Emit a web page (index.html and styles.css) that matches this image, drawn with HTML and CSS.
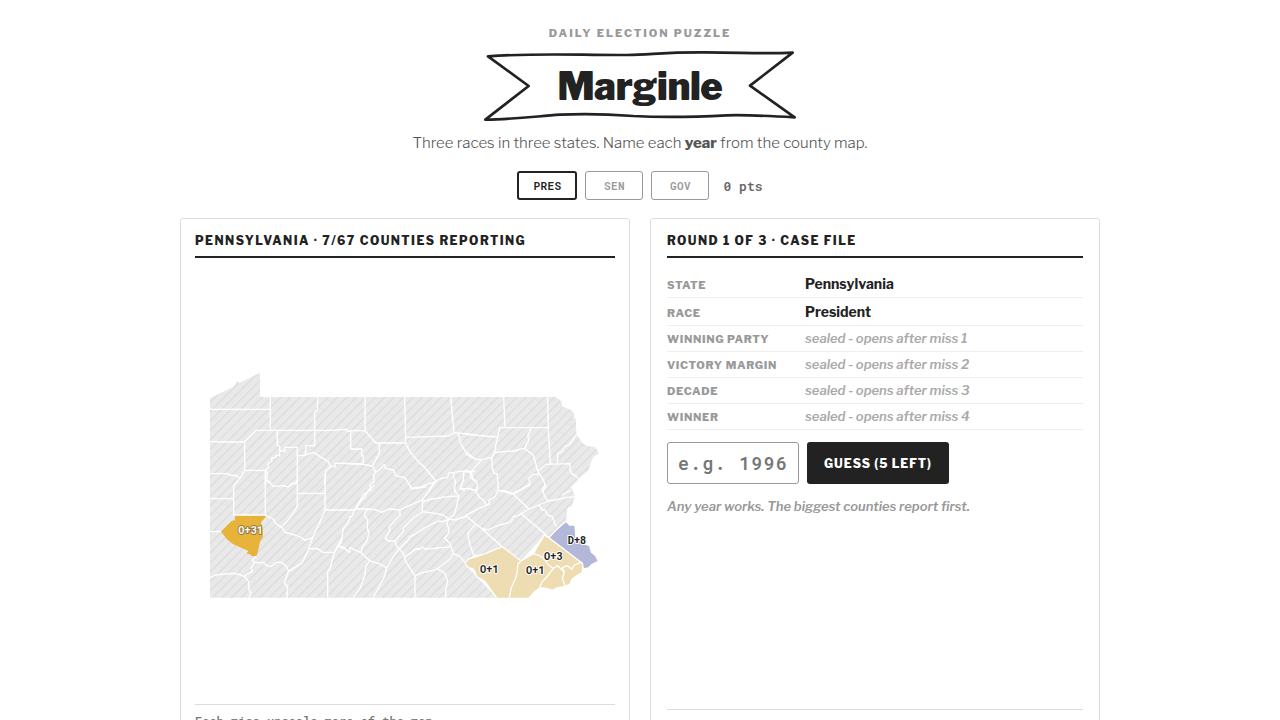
FILE: index.html
```html
<!DOCTYPE html>
<html lang="en">
<head>
<meta charset="utf-8">
<meta name="viewport" content="width=device-width, initial-scale=1">
<title>Marginle</title>
<link rel="stylesheet" href="styles.css">
</head>
<body>
<header class="masthead">
  <p class="kicker">Daily Election Puzzle</p>
  <div class="banner">
    <svg class="ribbon" viewBox="240 84 960 228" aria-hidden="true">
      <path d="M264 109C420 98 540 106 680 105C760 103 790 97 900 97C1010 96 1080 103 1178 98L1050 197L1184 292C1080 286 1040 284 980 286C880 291 760 291 700 288C620 282 560 280 480 284C400 290 340 298 256 299L386 198Z"/>
    </svg>
    <h1 class="title">Marginle</h1>
  </div>
  <p class="tagline">Three races in three states. Name each <strong>year</strong> from the county map.</p>
  <nav class="rounds" aria-label="Rounds">
    <button class="tab tab-active" type="button">PRES</button>
    <button class="tab" type="button">SEN</button>
    <button class="tab" type="button">GOV</button>
    <span class="score">0 pts</span>
  </nav>
</header>
<main class="board">
  <section class="panel map-panel">
    <h2 class="panel-title">Pennsylvania · 7/67 counties reporting</h2>
    <svg class="map" viewBox="0 0 1260 1260" role="img" aria-label="Pennsylvania county map">
      <defs>
        <pattern id="hatch" width="20" height="20" patternUnits="userSpaceOnUse" patternTransform="rotate(45)">
          <rect class="hatch-base" width="20" height="20"/>
          <path class="hatch-line" d="M2 0V20"/>
        </pattern>
      </defs>
      <path fill="url(#hatch)" d="M45 370L115 335L127 318L133 324L195 293V366H1083L1100 380L1102 395L1113 399L1130 406L1138 418L1136 428L1143 432V460L1145 478L1160 502L1178 514L1200 516L1212 535L1195 545L1185 570L1182 585L1160 602L1150 615L1128 635L1140 665L1130 692L1118 698L1116 715L1112 740L1062 788L1048 780L978 858L835 838L820 878L905 968H45Z"/>
      <g class="tossup" transform="translate(810 630)">
        <path d="M0 235L10 222L55 208L112 185L168 228L205 206L238 150L352 235L350 262L335 270L318 283L315 295L300 302L275 307L262 314L245 308L225 306L208 318L190 338H95L75 312L60 290L35 275L30 262L25 252L10 248Z"/>
      </g>
      <path class="dem" transform="translate(810 630)" d="M252 158L270 138L290 120L302 110L313 122H328L331 158L355 178L372 183L378 203L390 213L398 228L378 238L370 247L355 250L352 235Z"/>
      <path class="other" transform="translate(30 600)" d="M90 120H181V127L168 142L173 160L174 185L165 200L160 225L155 243H140L135 238L125 236L130 228L85 208L68 195L48 170L65 152L80 138L90 136Z"/>
      <g class="borders">
        <path transform="translate(30 270)" d="M15 133H196M196 94V195M119 231L137 212L155 196H390M15 230L60 231H119V316H181M338 94L337 135L329 140V242H303L300 272H277M217 196V240L224 244V258H240V247H277V360M300 270L325 262L345 275L370 290L377 305H390V295H415L470 297M377 305L362 318L359 360M224 262V272H212V277L200 279V290L190 294V308L181 316L188 325L184 348L198 352M119 316L104 340L86 362M104 340L95 332L72 330L70 326H15M181 316V360"/>
        <path transform="translate(420 330)" d="M0 135L35 133L37 140L47 137H90M90 36V137L122 174H212M209 36L212 174M212 157L340 153L357 143L380 145L420 149M347 36L357 143M47 137V192H80V212H85V238M0 235H30L85 238L113 243L133 205V176M113 243L122 262L115 270L118 290L105 300L108 315L85 328L60 375M122 262L135 252L148 238L152 250L175 255L182 272L210 278L230 310L260 305L303 288M212 174L225 200L250 230L265 243L303 288L275 328M303 288L320 280L337 278L342 264L358 262L385 258L405 262L420 258M370 145L377 175L390 198L420 222M358 262L355 275L362 290L358 310L360 320M387 258L385 285L375 312L400 310L415 315M405 262L408 280L420 285"/>
        <path transform="translate(810 330)" d="M0 148L98 156M116 36L120 128M104 128H250M104 128L98 156L88 202L80 222L82 250L88 265L97 267L100 316M88 202L145 198L178 190M200 130L188 150L192 165L178 190L205 210L212 235L218 258L240 240M248 36L250 130L256 236M240 238L315 236V255L320 265L335 275L342 283M275 238L278 225V205L290 200L300 185L312 180L335 148M218 258L222 265L235 285L243 305L232 320M222 268H205L192 280L195 298L145 325M0 205L30 222L50 225L62 220L80 218M50 225L18 260L25 285L35 290L38 310L32 320M0 256L18 260M100 316L120 318L145 325M290 330L318 315"/>
        <path transform="translate(30 600)" d="M86 32V120H181V0M15 71H86M184 15L200 28L205 34L235 32L250 36L258 27L272 24L277 15M277 0V95L250 135L230 157M277 55H360M360 0V107L340 150L322 190M360 105H450M181 120L205 132L212 145L230 157L240 172L270 180L290 188L300 196L322 188M322 190L312 220L298 250L290 265L265 280L250 290L238 325L248 335L246 369M312 220L340 222L352 232H388M408 190L410 190L400 212L388 232L375 280L368 290V369M400 212L420 218M15 170H48M155 243L140 255L150 263L175 262L185 272L198 275L215 262H230L245 275L250 287L262 285M150 263L138 280L142 290L125 297L118 305L131 320L132 345L138 355L132 369M15 308L32 300L60 297L90 295L108 300L118 305"/>
        <path transform="translate(420 630)" d="M62 72L75 50L90 35L100 15L118 0M60 75L50 95H45L38 115L25 130L20 160L18 175L8 183L0 200M8 183L28 190L42 202L45 188L60 195L78 203L82 185L95 170L102 145L97 130L98 105L88 90L92 78L105 72M60 72H105L125 75L140 82L160 72L195 75L230 58L262 45L280 20L298 -10M78 203L105 228L130 235L155 248M105 228L92 245L90 270L75 310L55 338M155 248L150 270L130 310L115 338M155 248L175 215L192 192L183 180L180 168L160 168L150 160L165 138L162 125L180 105L195 90V75M225 0L230 12L275 5M262 45V80L235 100L205 130V138L180 168M262 80L300 85L325 90L342 102M262 50L290 42L340 35L370 33M342 102L325 110L310 108L270 128L240 148L225 155L220 165L192 192M360 20L372 33L358 90L342 102L360 105L395 93M360 20L358 10M375 12L390 15M342 102L335 118L342 130L340 145L328 160L345 175L348 185L355 205L375 215L390 232M348 185L300 190L270 192L262 186L252 194L245 190L210 215M192 192L205 205L210 225L225 250L240 272V338M240 272L265 262L300 255L310 250L345 222L355 207M305 250L330 265L338 290L332 315V338"/>
        <path transform="translate(810 630)" d="M5 10L30 15L42 35L55 45L62 58H72V45L90 35L98 18M0 92L68 58M98 15L125 22L145 28L192 72M145 28L195 -2M192 72L170 85L160 92L145 95L138 110L105 120L65 135L55 130M170 88L215 125L252 158M192 72L222 60L232 75H240L248 90L262 95L270 118L276 125M222 60L248 48L240 35L232 15L240 0M248 48L285 42L300 38L330 35M0 90L55 135L112 185L168 228M30 118L8 145L15 180L25 208M0 235L10 222L55 208L112 185M168 228L205 206L238 150L252 158L352 235L355 250M252 158L270 138L290 120L302 110M0 235L10 248L25 252L30 262L35 275L60 290L75 312L95 338M168 228L158 238L157 260L152 280L138 310L133 338M205 206L225 212L240 225L250 240L265 250L250 270L232 290L225 306M265 250L278 242L298 262L292 280L300 302M298 262L292 248L308 242L320 253L328 240L340 235L350 232"/>
      </g>
      <g class="labels">
        <text class="label-light" x="167" y="777">O+31</text>
        <text x="883" y="894">O+1</text>
        <text x="1021" y="897">O+1</text>
        <text x="1075" y="855">O+3</text>
        <text x="1146" y="807">D+8</text>
      </g>
    </svg>
    <p class="map-note">Each miss unseals more of the map.</p>
  </section>
  <section class="panel case-panel">
    <h2 class="panel-title">Round 1 of 3 · Case file</h2>
    <dl class="facts">
      <div class="fact"><dt>State</dt><dd>Pennsylvania</dd></div>
      <div class="fact"><dt>Race</dt><dd>President</dd></div>
      <div class="fact fact-sealed"><dt>Winning party</dt><dd>sealed - opens after miss 1</dd></div>
      <div class="fact fact-sealed"><dt>Victory margin</dt><dd>sealed - opens after miss 2</dd></div>
      <div class="fact fact-sealed"><dt>Decade</dt><dd>sealed - opens after miss 3</dd></div>
      <div class="fact fact-sealed"><dt>Winner</dt><dd>sealed - opens after miss 4</dd></div>
    </dl>
    <form class="guess">
      <input class="year" type="text" inputmode="numeric" placeholder="e.g. 1996" aria-label="Year">
      <button class="submit" type="submit">Guess (5 left)</button>
    </form>
    <p class="hint">Any year works. The biggest counties report first.</p>
    <div class="history"></div>
  </section>
</main>
</body>
</html>
```
FILE: styles.css
```css
:root {
  --ink: #222;
  --muted: #999;
  --line: #ddd;
  --sans: "Libre Franklin", Inter, "Liberation Sans", sans-serif;
  --mono: "Roboto Mono", "DejaVu Sans Mono", monospace;
}
* { box-sizing: border-box; }
body {
  margin: 0;
  padding: 24px 20px;
  background: #fff;
  color: var(--ink);
  font-family: var(--sans);
}
h1, h2, p, dl, dd { margin: 0; }
button, input { font: inherit; }
.masthead {
  display: flex;
  flex-direction: column;
  align-items: center;
  text-align: center;
}
.kicker {
  color: var(--muted);
  font-size: 11px;
  font-weight: 800;
  line-height: 18px;
  letter-spacing: 0.18em;
  text-transform: uppercase;
}
.banner {
  display: grid;
  place-items: center;
  margin-top: 6px;
}
.ribbon, .title { grid-area: 1 / 1; }
.ribbon { width: 320px; }
.ribbon path {
  fill: #fff;
  stroke: var(--ink);
  stroke-width: 8;
  stroke-linejoin: round;
}
.title {
  font-size: 38px;
  font-weight: 900;
  line-height: 48px;
  letter-spacing: -0.01em;
}
.tagline {
  margin-top: 8px;
  color: #555;
  font-size: 15px;
  font-weight: 300;
  line-height: 22px;
}
.tagline strong { font-weight: 800; }
.rounds {
  display: flex;
  align-items: center;
  gap: 8px;
  margin: 17px 0 18px;
}
.tab {
  width: 58px;
  height: 29px;
  padding: 0;
  border: 1px solid var(--muted);
  border-radius: 3px;
  background: #fff;
  color: var(--muted);
  font-family: var(--mono);
  font-size: 11px;
  font-weight: 600;
  letter-spacing: 0.04em;
}
.tab-active {
  width: 60px;
  border: 2px solid var(--ink);
  color: var(--ink);
}
.score {
  margin-left: 6px;
  color: #666;
  font-family: var(--mono);
  font-size: 13px;
  font-weight: 600;
}
.board {
  display: grid;
  grid-template-columns: 1fr 1fr;
  gap: 20px;
  max-width: 920px;
  margin: 0 auto;
}
.panel {
  display: flex;
  flex-direction: column;
  border: 1px solid var(--line);
  border-radius: 3px;
}
.map-panel { padding: 12px 14px; }
.case-panel { padding: 12px 16px; }
.panel-title {
  padding-bottom: 5px;
  border-bottom: 2px solid var(--ink);
  font-size: 12px;
  font-weight: 800;
  line-height: 20px;
  letter-spacing: 0.12em;
  text-transform: uppercase;
}
.map {
  width: 100%;
  margin: 17px 0 9px;
}
.hatch-base { fill: #e9e9e9; }
.hatch-line { stroke: #d8d8d8; stroke-width: 3; }
.tossup { fill: #eedcb3; }
.dem { fill: #b3b7d8; }
.other { fill: #e8b33a; }
.borders {
  fill: none;
  stroke: #fff;
  stroke-width: 4;
  stroke-linejoin: round;
}
.labels {
  fill: var(--ink);
  stroke: #fff;
  stroke-width: 6;
  stroke-linejoin: round;
  paint-order: stroke;
  font-family: "Roboto Mono", Roboto, sans-serif;
  font-size: 31px;
  font-weight: 700;
  text-anchor: middle;
}
.label-light { fill: #fff; stroke: #94783a; }
.map-note {
  padding-top: 7px;
  border-top: 1px solid var(--line);
  color: #777;
  font-family: var(--mono);
  font-size: 12px;
  font-weight: 500;
  line-height: 18px;
}
.facts { padding-top: 12px; }
.fact {
  display: grid;
  grid-template-columns: 130px 1fr;
  gap: 8px;
  align-items: baseline;
  padding: 4px 0 3px;
  border-bottom: 1px solid #eee;
}
.fact dt {
  color: var(--muted);
  font-size: 11px;
  font-weight: 800;
  line-height: 16px;
  letter-spacing: 0.06em;
  text-transform: uppercase;
}
.fact dd {
  font-size: 14px;
  font-weight: 700;
  line-height: 20px;
}
.fact-sealed { padding: 3px 0 4px; }
.fact-sealed dd {
  color: #aaa;
  font-size: 13px;
  font-style: italic;
  font-weight: 600;
  line-height: 18px;
}
.guess {
  display: flex;
  gap: 8px;
  margin-top: 12px;
}
.year {
  width: 132px;
  height: 42px;
  padding: 0 10px;
  border: 1px solid var(--muted);
  border-radius: 3px;
  color: var(--ink);
  font-family: var(--mono);
  font-size: 18px;
  font-weight: 600;
  letter-spacing: 0.08em;
}
.year::placeholder { color: #777; }
.submit {
  min-width: 142px;
  height: 42px;
  padding: 0 16px;
  border: 0;
  border-radius: 3px;
  background: var(--ink);
  color: #fff;
  font-size: 12px;
  font-weight: 800;
  letter-spacing: 0.08em;
  text-transform: uppercase;
}
.hint {
  margin-top: 12px;
  color: #999;
  font-size: 13px;
  font-style: italic;
  font-weight: 600;
  line-height: 20px;
}
.history {
  min-height: 20px;
  margin-top: 193px;
  border-top: 1px solid var(--line);
}
```
